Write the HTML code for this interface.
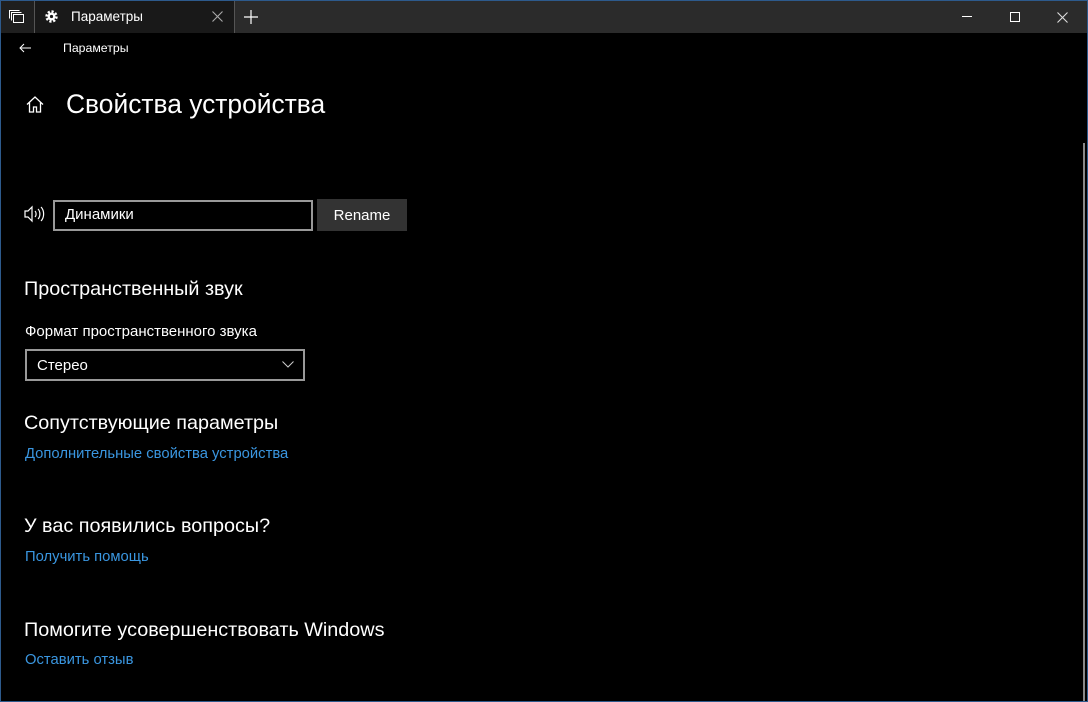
<!DOCTYPE html>
<html><head><meta charset="utf-8"><style>
*{margin:0;padding:0;box-sizing:border-box}
body{width:1088px;height:702px;background:#000;font-family:"Segoe UI","Liberation Sans","DejaVu Sans",sans-serif;color:#fff;position:relative;overflow:hidden}
.border{position:absolute;inset:0;border:1px solid #2d5a8c;pointer-events:none}
.tb{position:absolute;left:0;top:0;width:1088px;height:33px;background:#2b2b2b}
.t0{position:absolute;left:1px;top:1px;width:33px;height:32px;background:#1f1f1f}
.tab{position:absolute;left:35px;top:1px;width:199px;height:32px;background:#191919}
.sep{position:absolute;top:1px;width:1px;height:32px;background:#555}
.a{position:absolute;white-space:nowrap}
.h2{font-size:19.8px}
.link{color:#3a96e0;font-size:14.8px}
</style></head><body>
<div class="tb"></div>
<div class="t0"></div>
<div class="tab"></div>
<div class="sep" style="left:34px"></div>
<div class="sep" style="left:234px"></div>
<svg class="a" style="left:9px;top:9px" width="16" height="16" viewBox="0 0 16 16" fill="none" stroke="#fff" stroke-width="1"><rect x="4.5" y="5.5" width="10" height="8"/><path d="M2.5 11.5V3.5h10M0.5 9.5V1.5h10"/></svg>
<svg class="a" style="left:45px;top:10px" width="13" height="13" viewBox="0 0 13 13"><circle cx="6.5" cy="6.5" r="5" fill="none" stroke="#fff" stroke-width="2.4" stroke-dasharray="2.2 1.7"/><circle cx="6.5" cy="6.5" r="4" fill="#fff"/><circle cx="6.5" cy="6.5" r="1.6" fill="#191919"/></svg>
<div class="a" style="left:71px;top:9px;font-size:13.5px">Параметры</div>
<svg class="a" style="left:212px;top:11px" width="11" height="11" viewBox="0 0 11 11" stroke="#aaa" stroke-width="1.1"><path d="M0.5 0.5L10.5 10.5M10.5 0.5L0.5 10.5"/></svg>
<svg class="a" style="left:244px;top:10px" width="14" height="14" viewBox="0 0 14 14" stroke="#fff" stroke-width="1.2"><path d="M7 0v14M0 7h14"/></svg>
<div class="a" style="left:962px;top:16px;width:10px;height:1px;background:#fff"></div>
<div class="a" style="left:1010px;top:12px;width:10px;height:10px;border:1px solid #fff"></div>
<svg class="a" style="left:1057px;top:12px" width="11" height="11" viewBox="0 0 11 11" stroke="#ddd" stroke-width="1.1"><path d="M0.5 0.5L10.5 10.5M10.5 0.5L0.5 10.5"/></svg>
<svg class="a" style="left:19px;top:43px" width="12" height="10" viewBox="0 0 12 10" fill="none" stroke="#fff" stroke-width="1"><path d="M12 5H1M5 1L1 5l4 4"/></svg>
<div class="a" style="left:63px;top:41px;font-size:12.3px">Параметры</div>
<svg class="a" style="left:26px;top:96px" width="18" height="17" viewBox="0 0 18 17" fill="none" stroke="#fff" stroke-width="1.3"><path d="M1 8.5L9 1l8 7.5M3.5 6.5V16h4v-5h3v5h4V6.5"/></svg>
<div class="a" style="left:66px;top:89px;font-size:26.4px;font-weight:300">Свойства устройства</div>
<svg class="a" style="left:24px;top:205px" width="22" height="18" viewBox="0 0 22 18" fill="none" stroke="#fff" stroke-width="1.2"><path d="M1 6h3l4-4v14l-4-4H1z M11 6c1.5 1.5 1.5 4.5 0 6M14 4c2.5 2.5 2.5 7.5 0 10M17 2c3.5 3.5 3.5 10.5 0 14"/></svg>
<div class="a" style="left:53px;top:200px;width:260px;height:31px;border:2px solid #999"></div>
<div class="a" style="left:65px;top:206px;font-size:15px">Динамики</div>
<div class="a" style="left:317px;top:199px;width:90px;height:32px;background:#333;font-size:15px;text-align:center;line-height:34px">Rename</div>
<div class="a h2" style="left:24px;top:278px">Пространственный звук</div>
<div class="a" style="left:25px;top:323px;font-size:15px">Формат пространственного звука</div>
<div class="a" style="left:25px;top:349px;width:280px;height:32px;border:2px solid #999"></div>
<div class="a" style="left:37px;top:357px;font-size:15px">Стерео</div>
<svg class="a" style="left:282px;top:361px" width="12" height="7" viewBox="0 0 12 7" fill="none" stroke="#ccc" stroke-width="1"><path d="M0.5 0.5l5.5 5.5 5.5-5.5"/></svg>
<div class="a h2" style="left:24px;top:412px">Сопутствующие параметры</div>
<div class="a link" style="left:25px;top:446px">Дополнительные свойства устройства</div>
<div class="a h2" style="left:24px;top:515px">У вас появились вопросы?</div>
<div class="a link" style="left:25px;top:549px">Получить помощь</div>
<div class="a h2" style="left:24px;top:619px">Помогите усовершенствовать Windows</div>
<div class="a link" style="left:25px;top:652px">Оставить отзыв</div>
<div class="a" style="left:1083px;top:143px;width:2px;height:559px;background:#888"></div>
<div class="border"></div>
</body></html>
